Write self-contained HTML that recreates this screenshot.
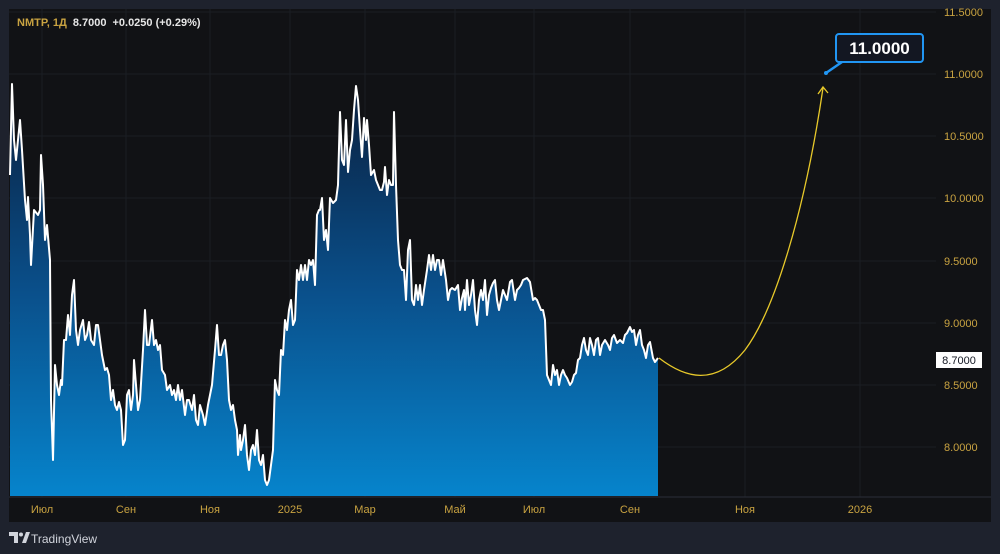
<!DOCTYPE html>
<html><head><meta charset="utf-8"><style>
html,body{margin:0;padding:0;background:#1e222d;width:1000px;height:554px;overflow:hidden;font-family:"Liberation Sans",sans-serif;}
</style></head><body>
<svg width="1000" height="554" viewBox="0 0 1000 554" xmlns="http://www.w3.org/2000/svg" style="position:absolute;left:0;top:0">
<defs>
<linearGradient id="g" x1="0" y1="84" x2="0" y2="496" gradientUnits="userSpaceOnUse">
<stop offset="0" stop-color="#0b1f3d"/><stop offset="0.5" stop-color="#0a4f8a"/><stop offset="1" stop-color="#0684cc"/>
</linearGradient>
</defs>
<rect x="0" y="0" width="1000" height="554" fill="#1e222d"/>
<rect x="9" y="9" width="982" height="513" fill="#111215"/>
<g stroke="#1b1e23" stroke-width="1">
<line x1="9" y1="12" x2="936" y2="12"/><line x1="9" y1="74" x2="936" y2="74"/><line x1="9" y1="136" x2="936" y2="136"/><line x1="9" y1="198" x2="936" y2="198"/><line x1="9" y1="261" x2="936" y2="261"/><line x1="9" y1="323" x2="936" y2="323"/><line x1="9" y1="385" x2="936" y2="385"/><line x1="9" y1="447" x2="936" y2="447"/>
<line x1="42" y1="9" x2="42" y2="497"/><line x1="126" y1="9" x2="126" y2="497"/><line x1="210" y1="9" x2="210" y2="497"/><line x1="290" y1="9" x2="290" y2="497"/><line x1="365" y1="9" x2="365" y2="497"/><line x1="455" y1="9" x2="455" y2="497"/><line x1="534" y1="9" x2="534" y2="497"/><line x1="630" y1="9" x2="630" y2="497"/><line x1="745" y1="9" x2="745" y2="497"/><line x1="860" y1="9" x2="860" y2="497"/>
</g>
<line x1="9" y1="497" x2="991" y2="497" stroke="#2a2e39"/>
<polygon fill="url(#g)" points="10,496 10,175 12,84 14,140 16,160 18,140 20,120 22,150 25,200 27,220 28,197 30,235 31,265 34,210 38,215 40,210 41,155 43,185 45,240 47,225 50,260 51,400 53,460 55,365 57,385 59,395 61,380 62,385 64,340 66,340 68,315 70,335 72,295 74,280 76,330 78,345 80,330 83,320 85,340 87,335 89,322 91,340 94,345 96,325 98,325 100,340 102,355 105,370 107,368 109,375 111,400 113,390 115,405 117,410 119,402 121,410 123,445 125,440 127,395 129,390 131,410 133,395 134,360 136,385 138,410 140,400 143,350 145,310 147,345 149,345 152,320 154,345 156,340 158,350 160,345 162,370 165,375 167,390 170,385 172,395 174,390 176,400 178,385 180,400 182,390 185,415 187,400 189,400 192,410 194,395 196,420 198,425 200,405 203,415 205,425 208,405 212,385 215,350 217,325 219,355 221,355 223,345 225,340 227,360 229,400 231,410 233,405 235,420 237,430 238,455 240,435 241,450 243,440 245,425 247,455 249,470 251,450 253,445 255,455 257,430 259,460 261,465 263,455 265,480 267,485 269,480 271,465 273,450 275,380 277,390 279,395 281,350 283,355 285,320 287,330 289,310 291,300 293,325 295,320 297,270 299,280 301,265 303,280 305,265 307,280 309,260 311,265 313,260 315,285 317,215 319,210 320,210 322,198 324,240 326,230 328,250 330,198 333,203 336,200 338,185 340,112 342,160 344,165 346,120 348,172 350,150 352,140 354,110 356,86 358,100 360,130 362,157 364,118 366,140 367,120 369,145 371,175 374,170 376,180 378,185 380,190 382,190 384,182 385,167 387,195 389,180 391,185 393,185 394,112 396,185 398,240 400,265 402,270 404,270 406,300 408,250 410,240 412,300 414,305 416,285 418,300 420,285 422,305 424,290 427,270 429,255 431,270 433,255 435,270 437,260 439,260 441,275 443,260 446,280 448,300 450,290 452,288 455,290 458,285 460,310 462,298 464,290 465,310 467,280 469,305 471,295 473,280 475,310 477,325 479,300 481,290 483,300 485,280 487,315 489,295 491,288 493,283 495,280 497,300 499,310 501,300 503,290 505,295 507,300 510,282 512,280 515,300 517,290 519,288 521,285 523,280 527,278 530,282 533,300 535,298 537,300 539,305 541,310 543,310 545,320 547,375 549,380 551,385 553,365 555,375 557,370 559,385 561,375 563,370 565,375 567,378 570,385 572,382 574,375 576,373 578,360 580,358 582,345 584,338 586,350 588,355 590,338 592,345 594,355 596,340 598,338 600,355 602,345 605,340 608,345 610,350 612,338 614,335 617,343 620,340 623,343 625,335 627,333 630,327 632,332 634,330 636,345 638,335 640,330 642,345 644,350 646,358 648,345 650,342 653,358 655,362 658,358 658,496"/>
<polyline fill="none" stroke="#fff" stroke-width="2" stroke-linejoin="round" points="10,175 12,84 14,140 16,160 18,140 20,120 22,150 25,200 27,220 28,197 30,235 31,265 34,210 38,215 40,210 41,155 43,185 45,240 47,225 50,260 51,400 53,460 55,365 57,385 59,395 61,380 62,385 64,340 66,340 68,315 70,335 72,295 74,280 76,330 78,345 80,330 83,320 85,340 87,335 89,322 91,340 94,345 96,325 98,325 100,340 102,355 105,370 107,368 109,375 111,400 113,390 115,405 117,410 119,402 121,410 123,445 125,440 127,395 129,390 131,410 133,395 134,360 136,385 138,410 140,400 143,350 145,310 147,345 149,345 152,320 154,345 156,340 158,350 160,345 162,370 165,375 167,390 170,385 172,395 174,390 176,400 178,385 180,400 182,390 185,415 187,400 189,400 192,410 194,395 196,420 198,425 200,405 203,415 205,425 208,405 212,385 215,350 217,325 219,355 221,355 223,345 225,340 227,360 229,400 231,410 233,405 235,420 237,430 238,455 240,435 241,450 243,440 245,425 247,455 249,470 251,450 253,445 255,455 257,430 259,460 261,465 263,455 265,480 267,485 269,480 271,465 273,450 275,380 277,390 279,395 281,350 283,355 285,320 287,330 289,310 291,300 293,325 295,320 297,270 299,280 301,265 303,280 305,265 307,280 309,260 311,265 313,260 315,285 317,215 319,210 320,210 322,198 324,240 326,230 328,250 330,198 333,203 336,200 338,185 340,112 342,160 344,165 346,120 348,172 350,150 352,140 354,110 356,86 358,100 360,130 362,157 364,118 366,140 367,120 369,145 371,175 374,170 376,180 378,185 380,190 382,190 384,182 385,167 387,195 389,180 391,185 393,185 394,112 396,185 398,240 400,265 402,270 404,270 406,300 408,250 410,240 412,300 414,305 416,285 418,300 420,285 422,305 424,290 427,270 429,255 431,270 433,255 435,270 437,260 439,260 441,275 443,260 446,280 448,300 450,290 452,288 455,290 458,285 460,310 462,298 464,290 465,310 467,280 469,305 471,295 473,280 475,310 477,325 479,300 481,290 483,300 485,280 487,315 489,295 491,288 493,283 495,280 497,300 499,310 501,300 503,290 505,295 507,300 510,282 512,280 515,300 517,290 519,288 521,285 523,280 527,278 530,282 533,300 535,298 537,300 539,305 541,310 543,310 545,320 547,375 549,380 551,385 553,365 555,375 557,370 559,385 561,375 563,370 565,375 567,378 570,385 572,382 574,375 576,373 578,360 580,358 582,345 584,338 586,350 588,355 590,338 592,345 594,355 596,340 598,338 600,355 602,345 605,340 608,345 610,350 612,338 614,335 617,343 620,340 623,343 625,335 627,333 630,327 632,332 634,330 636,345 638,335 640,330 642,345 644,350 646,358 648,345 650,342 653,358 655,362 658,358"/>
<path d="M659,358 C685,378 715,387 745,350 C775,310 805,210 823,88" fill="none" stroke="#e8c92a" stroke-width="1.3"/>
<path d="M818,94 L823,87 L828,93" fill="none" stroke="#e8c92a" stroke-width="1.3"/>
<line x1="826" y1="73" x2="842" y2="62" stroke="#2196f3" stroke-width="2.5"/>
<circle cx="826" cy="73" r="2" fill="#2196f3"/>
<rect x="836" y="34" width="87" height="28" rx="3" fill="#131722" stroke="#2196f3" stroke-width="2"/>
<text x="879.5" y="54" text-anchor="middle" fill="#fff" font-size="17" font-weight="bold" font-family="Liberation Sans,sans-serif">11.0000</text>
<g fill="#c9a341" font-size="11" font-family="Liberation Sans,sans-serif">
<text x="944" y="16">11.5000</text><text x="944" y="78">11.0000</text><text x="944" y="140">10.5000</text><text x="944" y="202">10.0000</text><text x="944" y="265">9.5000</text><text x="944" y="327">9.0000</text><text x="944" y="389">8.5000</text><text x="944" y="451">8.0000</text>
</g>
<rect x="936" y="352" width="46" height="16" fill="#fff"/>
<text x="959" y="364" text-anchor="middle" fill="#131722" font-size="11" font-family="Liberation Sans,sans-serif">8.7000</text>
<g fill="#c9a341" font-size="11" font-family="Liberation Sans,sans-serif" text-anchor="middle">
<text x="42" y="513">Июл</text><text x="126" y="513">Сен</text><text x="210" y="513">Ноя</text><text x="290" y="513">2025</text><text x="365" y="513">Мар</text><text x="455" y="513">Май</text><text x="534" y="513">Июл</text><text x="630" y="513">Сен</text><text x="745" y="513">Ноя</text><text x="860" y="513">2026</text>
</g>
<text x="17" y="26" font-size="11" font-family="Liberation Sans,sans-serif" font-weight="bold"><tspan fill="#c9a341">NMTP, 1Д</tspan><tspan fill="#e6e6e6" dx="6">8.7000</tspan><tspan fill="#e6e6e6" dx="6">+0.0250 (+0.29%)</tspan></text>
<g fill="#d1d4dc">
<path d="M9,532 h9 v11 h-4 v-7 h-5z"/><circle cx="21" cy="534.5" r="2"/><path d="M22,543 l4,-11 h4 l-4,11z"/>
</g>
<text x="31" y="543" fill="#d1d4dc" font-size="12" font-family="Liberation Sans,sans-serif">TradingView</text>
</svg>
</body></html>
